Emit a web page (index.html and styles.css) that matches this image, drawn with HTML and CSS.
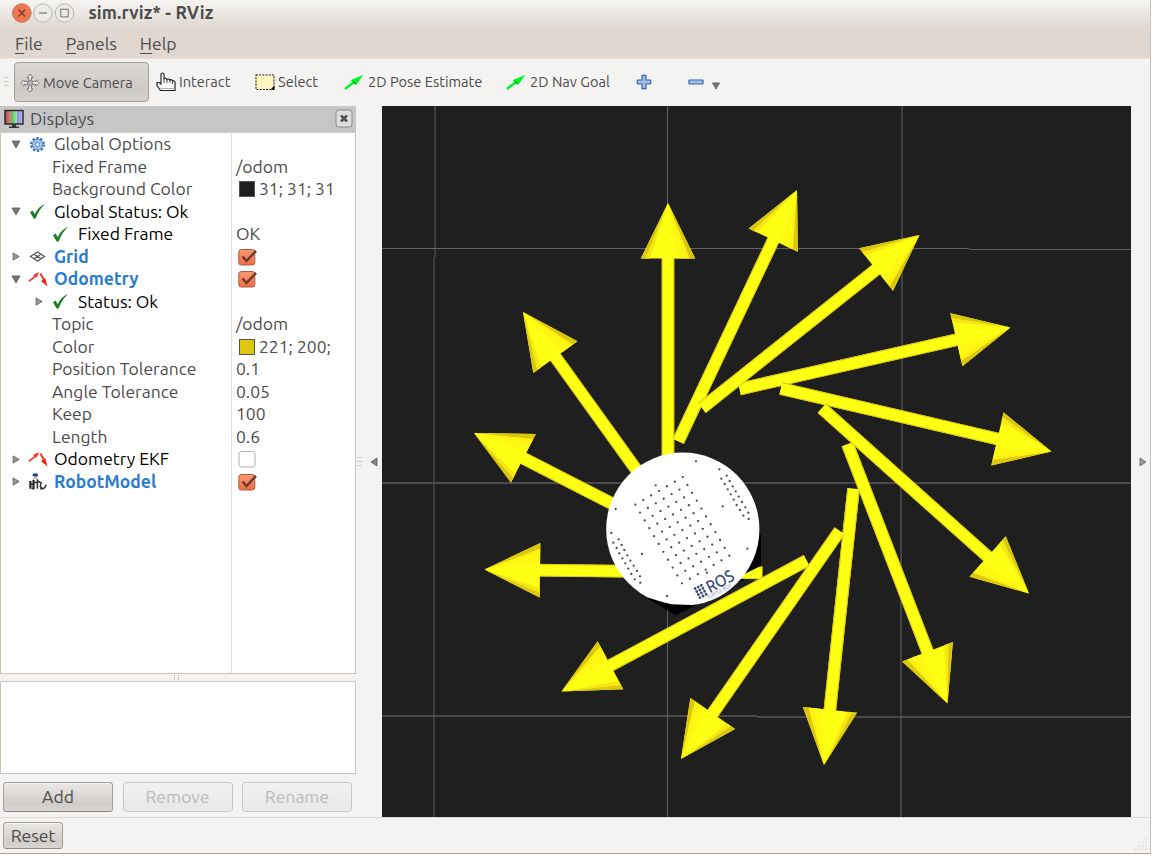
FILE: index.html
```html
<!DOCTYPE html>
<html lang="en">
<head>
<meta charset="utf-8">
<title>sim.rviz* - RViz</title>
<link rel="stylesheet" href="styles.css">
</head>
<body>
<svg class="defs" width="0" height="0">
  <defs>
    <linearGradient id="boxfill" x1="0" y1="0" x2="0" y2="1"><stop offset="0" stop-color="#f99a76"/><stop offset="1" stop-color="#ee6f45"/></linearGradient>
    <symbol id="down" viewBox="0 0 10 9"><path d="M1 1h8L5 8z" fill="#777" stroke="#555" stroke-width=".8"/></symbol>
    <symbol id="right" viewBox="0 0 9 10"><path d="M1.3 1v8L8 5z" fill="#999" stroke="#555" stroke-width=".9"/></symbol>
    <symbol id="tick" viewBox="0 0 17 17"><path d="M1 9.300L3.600 7.600l2.200 3.600C8 6.500 11 3 16 .8 12 4.800 8.800 9.500 6.700 15.400H4.700z" fill="#1e7d28"/></symbol>
    <symbol id="box" viewBox="0 0 19 18"><rect x=".8" y="1.500" width="16" height="15.500" rx="2.500" fill="url(#boxfill)" stroke="#b65a3d"/><path d="M4.500 8.500l4 4.500L18 2.800" fill="none" stroke="#6e3a2b" stroke-width="2.500"/></symbol>
    <symbol id="emptybox" viewBox="0 0 19 18"><rect x="1" y="1.500" width="16" height="15.500" rx="2.500" fill="#fff" stroke="#b9aea6"/></symbol>
    <symbol id="odo" viewBox="0 0 20 17"><path d="M.8 10.300L9 4" stroke="#f53228" stroke-width="1.600"/><path d="M5 4L11.300 1 8.500 6.500z" fill="#f53228"/><path d="M12.300 2.500l4.200 7" stroke="#f53228" stroke-width="2"/><path d="M13 10l4.300-2.800L19.500 15.500z" fill="#f02018"/></symbol>
    <symbol id="pose" viewBox="0 0 20 17"><path d="M1 15L10 8" stroke="#00f52b" stroke-width="2.600"/><path d="M6.500 6.300L19.500 .8 12 11.300z" fill="#00f52b"/><path d="M8.500 6.500l3 2.200-.8 1.800z" fill="#087b20"/></symbol>
    <symbol id="gear" viewBox="0 0 18 18"><circle cx="9" cy="9" r="6.700" fill="none" stroke="#3d75b5" stroke-width="2.500" stroke-dasharray="2.500 1.710"/><circle cx="9" cy="9" r="5.600" fill="#a5c4e6" stroke="#4b80bd"/><circle cx="9" cy="9" r="2.300" fill="#e6effa" stroke="#4b80bd"/></symbol>
    <symbol id="grid" viewBox="0 0 18 14"><path d="M1.500 7L9 2.200 16.500 7 9 11.800zM5.200 4.600l7.600 4.800M5.200 9.400l7.600-4.800" fill="none" stroke="#555" stroke-width="1.300"/></symbol>
    <symbol id="robot" viewBox="0 0 20 19"><ellipse cx="7" cy="2.300" rx="3.200" ry="1.900" fill="#303b87"/><path d="M5 4.600h4.500v2H5z" fill="#bbb"/><path d="M1.500 9v8.500M5 7.500V17.500" stroke="#222" stroke-width="2.400" fill="none"/><path d="M9.300 7v10.500M9.500 9l4 2-1 4 2.500 2.500M15.500 17.500c2-.5 3-2 3.500-4.500M1 12.500h4M5.500 10.500h4M12.500 17.700h4M3 17.700h3" fill="none" stroke="#333" stroke-width="1.700"/></symbol>
    <g id="arrow">
      <rect x="-6.200" y="50" width="12.400" height="228" fill="#ffff14"/>
      <path d="M-5.800 50v228M5.800 50v228" stroke="#d9c812" stroke-width="1"/>
      <path d="M0 0L-27.200 55.500H27.200z" fill="#ffff14"/>
      <path d="M0 0L-27.200 55.500h5z" fill="#dcc70f"/>
      <path d="M0 0L-22.200 55.500h4.500z" fill="#f3e812"/>
      <path d="M0 0L8 55.500h9z" fill="#fff813"/>
      <path d="M0 0L17 55.500h5z" fill="#fff210"/>
      <path d="M0 0L21.700 55.500h5.500z" fill="#dcc70f"/>
    </g>
  </defs>
</svg>
<div class="window">
  <header class="titlebar">
    <svg class="controls" width="64" height="22" viewBox="0 0 64 22">
      <circle cx="10.800" cy="11" r="9.300" fill="#f17650" stroke="#bb7c64"/><path d="M7.500 7.500l6.600 7M14.100 7.500l-6.600 7" stroke="#7b3e2b" stroke-width="1.500"/>
      <circle cx="32" cy="11" r="9.200" fill="#edebe8" stroke="#b9b5b0"/><path d="M28 11h8" stroke="#888" stroke-width="1.400"/>
      <circle cx="53.500" cy="11" r="9.200" fill="#edebe8" stroke="#b9b5b0"/><rect x="49.700" y="7.300" width="7.500" height="7.500" fill="none" stroke="#888" stroke-width="1.200"/>
    </svg>
    <h1 class="title">sim.rviz* - RViz</h1>
  </header>
  <nav class="menu"><span><i>F</i>ile</span><span><i>P</i>anels</span><span><i>H</i>elp</span></nav>
  <div class="toolbar">
    <span class="grip-v"></span>
    <button class="tool active"><svg width="20" height="20" viewBox="0 0 20 20"><path d="M10 1l3 3.500h-1.600V7l1.200 1.400H16V6.800l3.300 3.200L16 13.200v-1.600h-3.400L11.400 13v3H13l-3 3-3-3h1.600v-3l-1.200-1.400H4v1.600L.7 10 4 6.800v1.600h3.400L8.600 7V4.500H7z" fill="#e6e5e3" stroke="#666" stroke-width="1" stroke-dasharray="2.500 .6"/><circle cx="10" cy="10" r="2.500" fill="#bbb" stroke="#777" stroke-width=".9"/></svg><span>Move Camera</span></button>
    <button class="tool interact"><svg width="20" height="20" viewBox="0 0 20 20"><path d="M5 12V2.700c0-2.300 3-2.300 3 0V7c.4-1 2.500-1 3 .5.600-.8 2.500-.6 3 .5.800-.6 2.200-.2 2.500 1 1.100-.5 2.500 0 2.500 1.500V18.500H4.500L1 13.500V10.500h2z" fill="#fff" stroke="#222" stroke-width="1.200"/><path d="M8 7v4M11 7.500V11M14 8v3M16.500 9.500V12" stroke="#333" stroke-width=".9"/><path d="M4.500 16.500H19" stroke="#999" stroke-width=".8"/></svg><span>Interact</span></button>
    <button class="tool select"><svg width="20" height="17" viewBox="0 0 20 17"><rect x="1" y="1" width="18" height="14.500" fill="#fdf5bd" stroke="#222" stroke-width="1.100" stroke-dasharray="2 1.200"/><path d="M15.500 15.500l4-4v4z" fill="#000"/></svg><span>Select</span></button>
    <button class="tool estimate"><svg width="20" height="17"><use href="#pose"/></svg><span>2D Pose Estimate</span></button>
    <button class="tool goal"><svg width="20" height="17"><use href="#pose"/></svg><span>2D Nav Goal</span></button>
    <svg class="plus" width="16" height="16" viewBox="0 0 16 16"><path d="M6 1.300h4V6h4.700v4H10v4.700H6V10H1.300V6H6z" fill="#9fc0e5" stroke="#3465a4" stroke-width="1.200" stroke-linejoin="round"/></svg>
    <svg class="minus" width="16" height="16" viewBox="0 0 16 16"><rect x="1" y="6" width="14" height="4" rx=".6" fill="#9fc0e5" stroke="#3465a4" stroke-width="1.200"/></svg>
    <svg class="more" width="10" height="8" viewBox="0 0 10 9"><use href="#down"/></svg>
  </div>
  <main class="body">
    <aside class="side">
      <div class="dockhead"><svg width="20" height="20" viewBox="0 0 20 20"><defs><linearGradient id="scr"><stop offset="0" stop-color="#b04848"/><stop offset=".33" stop-color="#d88"/><stop offset=".34" stop-color="#5b5"/><stop offset=".66" stop-color="#9e9"/><stop offset=".67" stop-color="#88d"/><stop offset="1" stop-color="#bbf"/></linearGradient></defs><rect x="1" y="1.500" width="18" height="13.500" fill="url(#scr)" stroke="#222" stroke-width="1.400"/><path d="M8 15.500h4v2h3V19H5v-1.500h3z" fill="#333"/></svg><span>Displays</span>
        <svg class="close" width="18" height="19" viewBox="0 0 18 19"><rect x="1" y="1" width="16" height="17" rx="3" fill="#ddd" stroke="#8d8b88"/><path d="M6 6.500l6 6M12 6.500l-6 6" stroke="#555" stroke-width="2.700"/></svg></div>
      <div class="tree">
        <div class="row l0"><svg class="exp"><use href="#down"/></svg><svg class="ico"><use href="#gear"/></svg><span class="name">Global Options</span><span class="val"></span></div>
        <div class="row leaf"><span class="name">Fixed Frame</span><span class="val">/odom</span></div>
        <div class="row leaf"><span class="name">Background Color</span><span class="val"><b class="swatch dark"></b>31; 31; 31</span></div>
        <div class="row l0 ok"><svg class="exp"><use href="#down"/></svg><svg class="ico"><use href="#tick"/></svg><span class="name">Global Status: Ok</span><span class="val"></span></div>
        <div class="row l1 ok"><svg class="exp"></svg><svg class="ico"><use href="#tick"/></svg><span class="name">Fixed Frame</span><span class="val">OK</span></div>
        <div class="row l0 on"><svg class="exp"><use href="#right"/></svg><svg class="ico"><use href="#grid"/></svg><span class="name">Grid</span><span class="val"><svg class="check"><use href="#box"/></svg></span></div>
        <div class="row l0 on"><svg class="exp"><use href="#down"/></svg><svg class="ico wide"><use href="#odo"/></svg><span class="name">Odometry</span><span class="val"><svg class="check"><use href="#box"/></svg></span></div>
        <div class="row l1 ok"><svg class="exp"><use href="#right"/></svg><svg class="ico"><use href="#tick"/></svg><span class="name">Status: Ok</span><span class="val"></span></div>
        <div class="row leaf"><span class="name">Topic</span><span class="val">/odom</span></div>
        <div class="row leaf"><span class="name">Color</span><span class="val"><b class="swatch gold"></b>221; 200;</span></div>
        <div class="row leaf"><span class="name">Position Tolerance</span><span class="val">0.1</span></div>
        <div class="row leaf"><span class="name">Angle Tolerance</span><span class="val">0.05</span></div>
        <div class="row leaf"><span class="name">Keep</span><span class="val">100</span></div>
        <div class="row leaf"><span class="name">Length</span><span class="val">0.6</span></div>
        <div class="row l0 ok"><svg class="exp"><use href="#right"/></svg><svg class="ico wide"><use href="#odo"/></svg><span class="name">Odometry EKF</span><span class="val"><svg class="check"><use href="#emptybox"/></svg></span></div>
        <div class="row l0 on"><svg class="exp"><use href="#right"/></svg><svg class="ico wide"><use href="#robot"/></svg><span class="name">RobotModel</span><span class="val"><svg class="check"><use href="#box"/></svg></span></div>
        <div class="row fill"><span class="name"></span><span class="val"></span></div>
      </div>
      <div class="split"><span class="grip-h"></span></div>
      <div class="help"></div>
      <div class="buttons"><button class="btn">Add</button><button class="btn off">Remove</button><button class="btn off">Rename</button></div>
    </aside>
    <div class="gutter"><span class="grip-v"></span><svg width="8" height="10" viewBox="0 0 8 10"><path d="M7 1v8L1 5z" fill="#888" stroke="#555" stroke-width=".8"/></svg></div>
    <svg class="view" id="view" width="749" height="711" viewBox="382 106 749 711">
      <rect x="382" y="106" width="749" height="711" fill="#1f1f1f"/>
      <g fill="none" stroke="#636363" stroke-width="1">
        <path d="M435 106V257M434 257V817" stroke="#4c4c4c" stroke-width="1.400"/>
        <path d="M667.500 106V817"/>
        <path d="M902 106V470M901 470V817" stroke="#4c4c4c" stroke-width="1.600"/>
        <path d="M382 248.500H969M969 249.500H1131"/>
        <path d="M382 483H1131" stroke="#4c4c4c" stroke-width="1.800"/>
        <path d="M382 716H757M757 717H1131" stroke="#585858" stroke-width="1.300"/>
      </g>
      <use href="#arrow" transform="translate(668 203)"/>
      <use href="#arrow" transform="translate(797 190) rotate(25.300)"/>
      <use href="#arrow" transform="translate(1010.500 327.500) rotate(77.200)"/>
      <use href="#arrow" transform="translate(919.500 235) rotate(51.500)"/>
      <use href="#arrow" transform="translate(1051.500 451.500) rotate(103.100)"/>
      <use href="#arrow" transform="translate(947.500 703.500) rotate(158.900)"/>
      <use href="#arrow" transform="translate(1029 593.500) rotate(131.800)"/>
      <use href="#arrow" transform="translate(824 765) rotate(186.100)"/>
      <use href="#arrow" transform="translate(523 312) rotate(-35.700)"/>
      <use href="#arrow" transform="translate(474 433) rotate(-62.900)"/>
      <path d="M757 532l4 3v34l-14 9-60 32-11 5-28-16z" fill="#000"/>
      <use href="#arrow" transform="translate(484.500 569.500) rotate(-89.300)"/>
      <path d="M757 533l3.500 2v31l-18 9z" fill="#000"/>
      <use href="#arrow" transform="translate(561.500 691.500) rotate(241.900)"/>
      <use href="#arrow" transform="translate(681 759) rotate(214.800)"/>
      <circle cx="682.800" cy="529.200" r="76.600" fill="#fff"/>
      <path d="M648 597.500l11 3.500 12 3.200 21 .8-18 9.500z" fill="#000"/>
      <g id="holes" fill="#4d4d4d"></g>
      <g transform="translate(699 599) rotate(-28)" fill="#3c4b78">
        <g id="logo"></g>
        <text class="ros" x="12.500" y="0" textLength="29" lengthAdjust="spacingAndGlyphs">ROS</text>
        <text class="turtle" x="8" y="4.500" textLength="27" lengthAdjust="spacingAndGlyphs">TURTLE BOT</text>
      </g>
    </svg>
    <div class="gutter right"><svg width="8" height="10" viewBox="0 0 8 10"><path d="M1 1v8L7 5z" fill="#999" stroke="#666" stroke-width=".8"/></svg></div>
  </main>
  <footer class="status"><button class="btn">Reset</button><svg class="resize" width="14" height="14" viewBox="0 0 14 14"><path d="M1 12.500h12M4.500 9h9M8 5.500h6M11.500 2h2" stroke="#d6d3d0" stroke-width="1.400" stroke-dasharray="1.400 2"/></svg></footer>
</div>
<script src="scene.js"></script>
</body>
</html>
```
FILE: styles.css
```css
* { box-sizing: border-box; }
body { margin: 0; background: #fff; font-family: Ubuntu, "Noto Sans", "Open Sans", sans-serif; font-size: 17.5px; color: #4c4c4c; overflow: hidden; }
svg { display: block; flex: none; }
.defs { position: absolute; }
button { font: inherit; letter-spacing: inherit; color: inherit; margin: 0; padding: 0; background: none; border: 0; white-space: nowrap; }
.window { width: 1151px; height: 854px; display: flex; flex-direction: column; background: #f4f3f1; border-right: 1px solid #c9c0ba; border-bottom: 1px solid #aaa49f; }
.titlebar { height: 28px; flex: none; display: flex; align-items: center; padding: 0 0 3px 11px; background: linear-gradient(#f6f5f3, #dfd7d0); }
.title { margin: 0 0 0 13.5px; font-size: 17.5px; font-weight: 700; line-height: 23px; letter-spacing: .1px; }
.menu { height: 31px; flex: none; display: flex; align-items: center; gap: 23px; padding: 0 0 0 15px; background: #dfd7d0; border-bottom: 1px solid #eae4df; }
.menu i { font-style: normal; text-decoration: underline; text-underline-offset: 3px; text-decoration-thickness: 1px; }
.toolbar { height: 47px; flex: none; display: flex; align-items: center; padding: 0 0 1px 4px; font-size: 14.600px; }
.tool span { position: relative; top: -1px; }
.grip-v { width: 5px; height: 10px; background: repeating-linear-gradient(#cfcbc7 0 1px, transparent 1px 4px); }
.tool { display: flex; align-items: center; height: 40px; }
.tool svg { margin-right: 3px; }
.tool.active { width: 135px; margin-left: 5px; padding: 2px 0 0 5px; border: 1.500px solid #a19d98; border-radius: 4px; background: linear-gradient(#dbd8d5, #cdcac6 70%, #d5d2ce); }
.interact { width: 99px; margin-left: 7px; }
.select { width: 89px; }
.estimate { width: 162px; }
.goal { width: 129.500px; }
.estimate svg, .goal svg { margin-right: 4px; }
.plus { margin-left: 0; }
.minus { margin-left: 36px; }
.more { margin: 8px 0 0 7px; }
.body { flex: 1; min-height: 0; display: flex; }
.side { width: 356px; display: flex; flex-direction: column; }
.dockhead { height: 27px; flex: none; display: flex; align-items: center; padding: 0 3px 1px 4px; background: #c6c6c6; border-bottom: 1px solid #d4c9c0; }
.dockhead span { margin-left: 6px; flex: 1; }
.tree { height: 541px; display: flex; flex-direction: column; background: #fff; border: 1px solid #cdc1b8; border-top: 0; }
.row { height: 22.5px; flex: none; display: flex; align-items: stretch; line-height: 22px; white-space: nowrap; }
.row > svg { align-self: center; }
.row.fill { flex: 1; height: auto; }
.name { flex: 1; }
.val { width: 124px; padding-left: 4px; border-left: 1px solid #dedede; display: flex; align-items: center; }
.exp { width: 10px; height: 9px; }
.l0 .exp { margin-left: 10px; }
.l1 .exp { margin-left: 33px; }
.ico { width: 17px; height: 17px; margin: 0 8px 0 8px; }
.l1 .ico { margin-right: 9px; }
.ico.wide { width: 20px; margin: 0 6px 0 7px; }
.leaf .name { padding-left: 51px; }
.ok .name { color: #000; }
.on .name { color: #2c7ccc; font-weight: 700; }
.check { width: 19px; height: 18px; margin-left: 2px; }
.swatch { width: 16px; height: 16px; margin: 0 4px 0 3px; border: 1px solid #555; }
.dark { background: #1f1f1f; }
.gold { background: #ddc80f; }
.split { height: 7px; display: flex; justify-content: center; align-items: center; }
.grip-h { width: 8px; height: 5px; background: repeating-linear-gradient(90deg, #cfcbc7 0 1px, transparent 1px 4px); }
.help { height: 93px; background: #fff; border: 1px solid #cdc1b8; }
.buttons { display: flex; gap: 9.5px; padding: 8px 0 0 3px; }
.btn { width: 110px; height: 30px; border: 1px solid #a29d98; border-bottom-color: #8d8883; border-radius: 3.500px; background: linear-gradient(#e9e7e5, #d1cdc9 75%, #d8d5d2); box-shadow: inset 0 1px #f3f2f1; padding-bottom: 1px; }
.btn.off { color: #bcb9b7; border-color: #c9c5c1; background: linear-gradient(#f2f1ef, #e9e8e6); }
.gutter { width: 26px; display: flex; align-items: center; gap: 8px; padding-left: 1px; }
.right { width: 19px; padding-left: 8px; }
.ros { font: 500 17px Ubuntu, "Noto Sans", sans-serif; }
.turtle { font: 5px Ubuntu, "Noto Sans", sans-serif; fill: #7c85a3; }
.status { height: 36px; flex: none; display: flex; justify-content: space-between; border-top: 1px solid #ddd9d5; padding: 4px 2px 0 3px; }
.status .btn { width: 60px; height: 27px; }
.resize { align-self: flex-end; margin-bottom: 2px; }
```
FILE: scene.js
```js
const NS = "http://www.w3.org/2000/svg";

function dot(parent, x, y, r) {
  const c = document.createElementNS(NS, "circle");
  c.setAttribute("cx", x);
  c.setAttribute("cy", y);
  c.setAttribute("r", r);
  parent.appendChild(c);
}

// Mounting holes of the top plate, in thirds of a pixel from (590, 430).
const holes = [
  [388,118],[394,146],[410,137],[404,162],[419,153],[413,178],[428,169],[422,193],[437,184],
  [431,209],[446,200],[440,225],[456,216],[450,240],[466,232],[460,257],[475,248],[476,267],
  [64,309],[70,338],[86,328],[80,354],[95,345],[88,370],[103,360],[97,385],[112,376],
  [106,400],[121,392],[115,416],[131,407],[124,432],[141,423],[134,448],[150,439],[151,458],
  [318,94],[77,237],[398,229],[156,372],[472,356],[231,498],[197,166],[351,428]
];
for (let row = 0; row < 11; row++) {
  for (let col = 0; col < 7; col++) {
    holes.push([136 + row * 14 + col * 23.7, 224 + row * 23.6 - col * 13.8]);
  }
}
const plate = document.getElementById("holes");
holes.forEach(([x, y]) => dot(plate, 590 + x / 3, 430 + y / 3, 1.15));

const logo = document.getElementById("logo");
for (let i = 0; i < 3; i++) {
  for (let j = 0; j < 4; j++) dot(logo, i * 3.5 + 1.5, j * 3.4 - 11, 1.4);
}
```
